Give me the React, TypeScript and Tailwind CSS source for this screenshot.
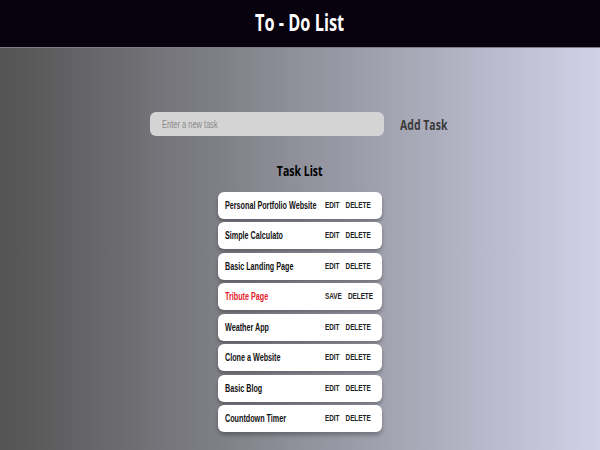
import React, { useState } from "react";

type Task = { id: number; name: string; editing?: boolean };

const initial: Task[] = [
  { id: 1, name: "Personal Portfolio Website" },
  { id: 2, name: "Simple Calculato" },
  { id: 3, name: "Basic Landing Page" },
  { id: 4, name: "Tribute Page", editing: true },
  { id: 5, name: "Weather App" },
  { id: 6, name: "Clone a Website" },
  { id: 7, name: "Basic Blog" },
  { id: 8, name: "Countdown Timer" },
];

export default function App() {
  const [tasks] = useState<Task[]>(initial);
  return (
    <div className="min-h-screen w-full flex flex-col bg-linear-to-r from-[#545454] to-[#d1d2e8]">
      <header className="h-12 bg-[#08020e] border-b border-[#7d7b8a] flex items-center justify-center pb-[4px]">
        <h1 className="text-white text-[24px] font-bold scale-x-[0.68] whitespace-nowrap font-['Open_Sans',sans-serif]">
          To - Do List
        </h1>
      </header>

      <main className="flex flex-col items-center">
        <div className="mt-[64px] flex items-center w-[300px]">
          <div className="w-[234px] h-[24px] rounded-[6px] bg-[#d4d4d4] overflow-hidden flex items-center">
            <input
              className="w-[312px] pl-[16px] bg-transparent outline-none origin-left scale-x-75 text-[10px] text-[#444] placeholder:text-[#8a8a8a] font-['Liberation_Sans',sans-serif]"
              placeholder="Enter a new task"
            />
          </div>
          <div className="ml-[16px] w-[50px]">
            <button className="origin-left scale-x-[0.7] whitespace-nowrap text-[15px] font-bold text-[#3a3a3a] font-['Open_Sans',sans-serif]">
              Add Task
            </button>
          </div>
        </div>

        <h2 className="mt-[23px] text-[15px] font-bold text-black scale-x-[0.7] whitespace-nowrap font-['Open_Sans',sans-serif]">
          Task List
        </h2>

        <ul className="mt-[10px] flex flex-col gap-[3.5px] w-[164px]">
          {tasks.map((t) => (
            <li
              key={t.id}
              className="h-[27px] bg-white rounded-[6px] shadow-[0_3px_4px_rgba(0,0,0,0.28)] flex items-center pl-[7px] font-['Liberation_Sans',sans-serif]"
            >
              <div className="w-[100px] flex items-center">
                <span
                  className={
                    "origin-left scale-x-[0.72] whitespace-nowrap text-[10px] font-bold " +
                    (t.editing ? "text-[#e3222b]" : "text-[#111]")
                  }
                >
                  {t.name}
                </span>
              </div>
              <div className="w-[57px] flex items-center">
                <div className="flex gap-[9px] origin-left scale-x-[0.67] text-[9.5px] font-bold text-[#222]">
                  <button>{t.editing ? "SAVE" : "EDIT"}</button>
                  <button>DELETE</button>
                </div>
              </div>
            </li>
          ))}
        </ul>
      </main>
    </div>
  );
}
